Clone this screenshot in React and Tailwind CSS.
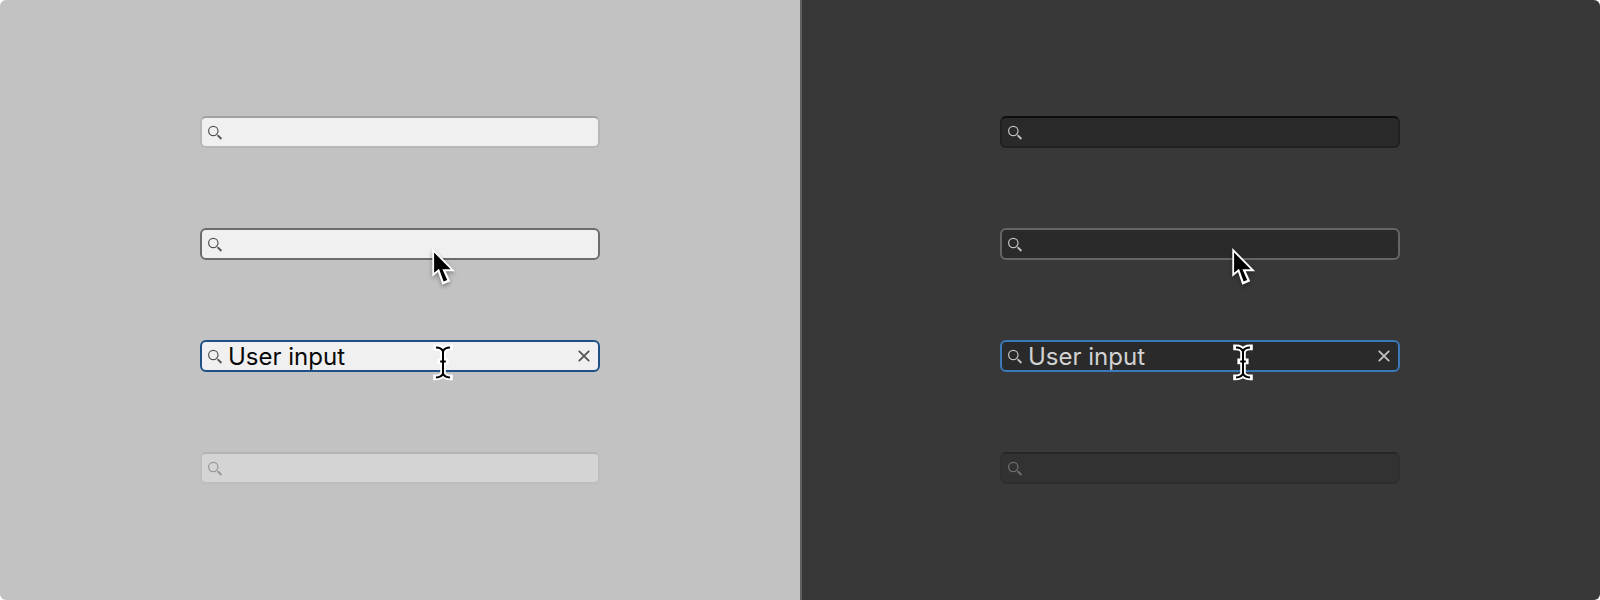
import React, { useState } from 'react';

const themes = {
  light: {
    panel: 'bg-[#c2c2c2]',
    input: 'bg-[#f0f0f0] text-[#090909]',
    icon: 'text-[#555555]',
    clear: 'text-[#555555]',
    rest: 'border-[#b7b7b7] border-t-[#a0a0a0]',
    hover: 'border-[#6c6c6c]',
    focus: 'border-[#1d5087]',
  },
  dark: {
    panel: 'bg-[#383838] shadow-[inset_2px_0_0_#606060]',
    input: 'bg-[#2a2a2a] text-[#d2d2d2]',
    icon: 'text-[#c2c2c2]',
    clear: 'text-[#c2c2c2]',
    rest: 'border-[#212121] border-t-[#0d0d0d]',
    hover: 'border-[#656565]',
    focus: 'border-[#3a79bb]',
  },
};

const SearchIcon = ({ className }) => (
  <svg viewBox="0 0 16 16" fill="none" stroke="currentColor" className={`pointer-events-none absolute top-2 left-2 size-4 ${className}`}>
    <circle cx="5.3" cy="7" r="4.7" strokeWidth="1.2" />
    <path d="M8.6 10.4L9.8 11.6" strokeWidth="1" />
    <path d="M9.8 11.4L13.4 15" strokeWidth="2" />
  </svg>
);

const ArrowCursor = () => (
  <svg viewBox="10 6 30 44" className="pointer-events-none absolute top-[18px] left-[230px] h-11 w-[30px] overflow-visible drop-shadow-[0_2px_2px_rgba(0,0,0,0.35)]">
    <path fill="#fff" d="M12.3 8V36.7L18 32L22.3 44.7L30.3 41.3L25.7 31.3H35.2Z" />
    <path fill="#000" d="M14.1 12.4V32.8L19 28.8L23.6 41.6L27.2 40L22.4 29.2H30.6Z" />
  </svg>
);

const beam = 'M16 17C19.5 17 22 18.2 23 21C24 18.2 26.5 17 30 17M23 20.5V43.5M16 47C19.5 47 22 45.8 23 43C24 45.8 26.5 47 30 47M20.2 31H25.8';

const TextCursor = () => (
  <svg viewBox="10 5.6 30 50" fill="none" className="pointer-events-none absolute -top-1 left-[230px] h-[50px] w-[30px] overflow-visible">
    <path d={beam} stroke="#fff" strokeWidth="5.6" strokeLinecap="square" />
    <path d={beam} stroke="#000" strokeWidth="2" />
  </svg>
);

const SearchField = ({ theme, state = 'rest', label, defaultValue = '', disabled, clearable, children }) => {
  const [value, setValue] = useState(defaultValue);

  return (
    <div className={`relative w-1/2 ${disabled ? 'opacity-40' : ''}`}>
      <input
        type="text"
        aria-label={label}
        value={value}
        disabled={disabled}
        onChange={(e) => setValue(e.target.value)}
        className={`block h-8 w-full rounded-md border-2 pr-8 pl-[26px] text-2xl leading-7 outline-none ${theme.input} ${theme[state]}`}
      />
      <SearchIcon className={theme.icon} />
      {clearable && value && (
        <button type="button" aria-label="Clear" onClick={() => setValue('')} className={`absolute top-2 right-2 size-4 ${theme.clear}`}>
          <svg viewBox="0 0 16 16" fill="none" stroke="currentColor" strokeWidth="1.8">
            <path d="M2.8 2.8L13.2 13.2M13.2 2.8L2.8 13.2" />
          </svg>
        </button>
      )}
      {children}
    </div>
  );
};

const Panel = ({ theme }) => (
  <section className={`flex flex-1 flex-col items-center justify-center gap-20 ${theme.panel}`}>
    <SearchField theme={theme} label="Search" />
    <SearchField theme={theme} label="Search, hovered" state="hover">
      <ArrowCursor />
    </SearchField>
    <SearchField theme={theme} label="Search, focused" state="focus" defaultValue="User input" clearable>
      <TextCursor />
    </SearchField>
    <SearchField theme={theme} label="Search, disabled" disabled />
  </section>
);

const App = () => {
  return (
    <div className="bg-white font-['Inter',sans-serif]">
      <main className="flex min-h-screen overflow-hidden rounded-md">
        <Panel theme={themes.light} />
        <Panel theme={themes.dark} />
      </main>
    </div>
  );
};

export default App;
